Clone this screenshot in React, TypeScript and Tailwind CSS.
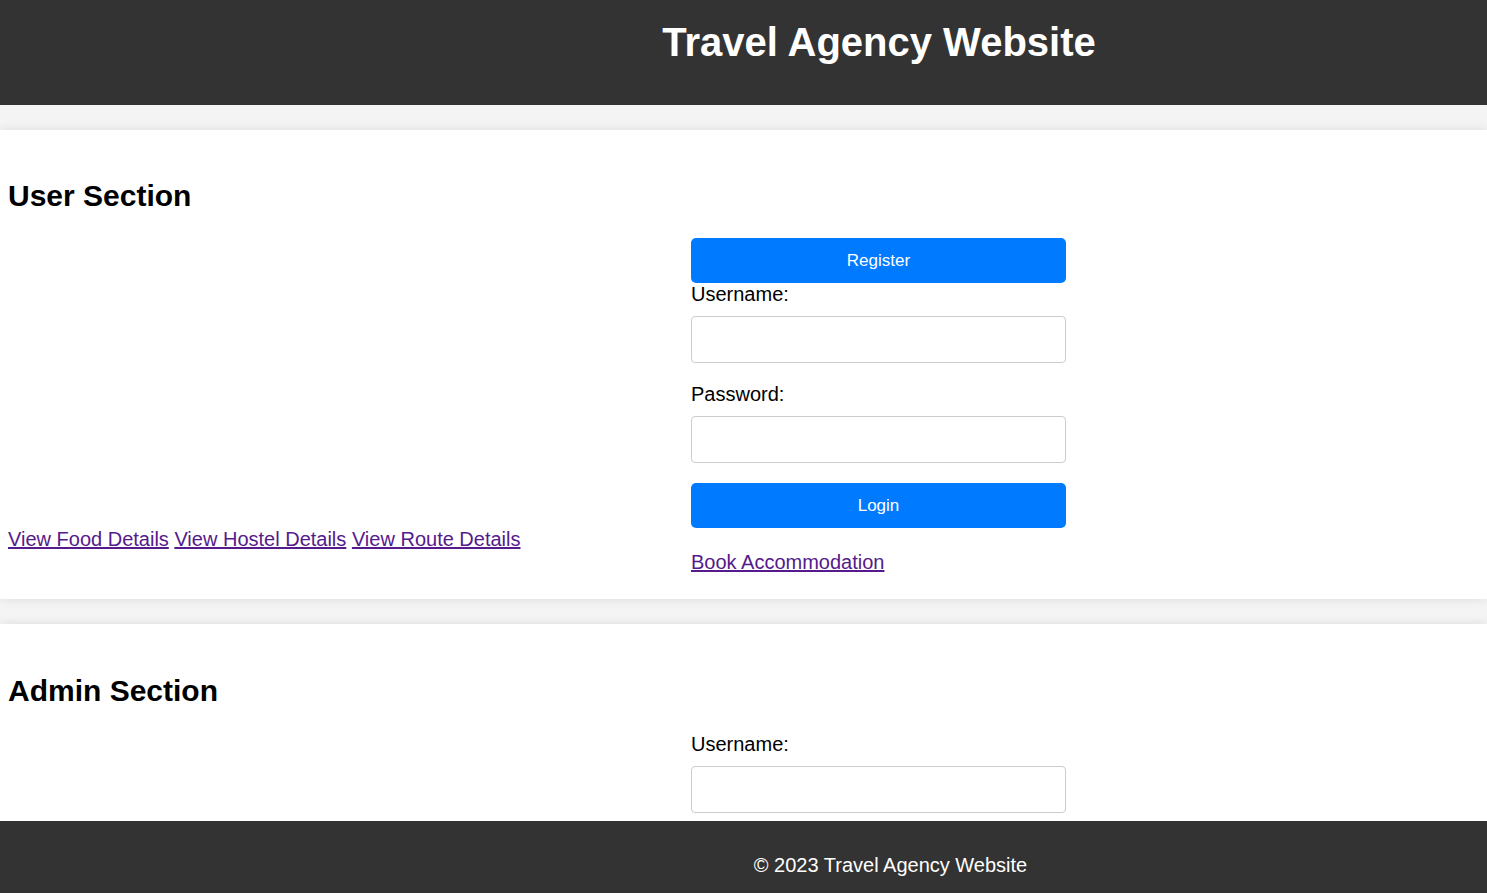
export default function App() {
  return (
    <div className="min-h-screen bg-[#f4f4f4] font-['Liberation_Sans',Arial,sans-serif] text-[20px] text-black">
      {/* Header */}
      <header className="h-[105px] bg-[#333333] pl-[271px] pt-[19px] text-center text-white">
        <h1 className="text-[40px] font-bold leading-[46px]">Travel Agency Website</h1>
      </header>

      <main className="flex flex-col gap-[25px] pt-[25px] pb-[80px]">
        {/* User Section */}
        <section className="bg-white px-2 pt-[49px] pb-[25px] shadow-[0_0_10px_rgba(0,0,0,0.1)]">
          <h2 className="text-[30px] font-bold leading-[34px]">User Section</h2>
          <div className="mt-[25px] flex items-end">
            <div className="w-[683px] shrink-0 pb-[23px] leading-[23px]">
              <a href="#" className="text-[#551a8b] underline">View Food Details</a>{" "}
              <a href="#" className="text-[#551a8b] underline">View Hostel Details</a>{" "}
              <a href="#" className="text-[#551a8b] underline">View Route Details</a>
            </div>
            <div className="w-[375px] shrink-0">
              <button className="block h-[45px] w-full rounded-[5px] bg-[#007bff] text-[17px] text-white">
                Register
              </button>
              <label className="block leading-[22px]">Username:</label>
              <input className="mt-[11px] block h-[47px] w-full rounded-[4px] border border-[#cccccc] px-[10px]" />
              <label className="mt-[20px] block leading-[22px]">Password:</label>
              <input type="password" className="mt-[11px] block h-[47px] w-full rounded-[4px] border border-[#cccccc] px-[10px]" />
              <button className="mt-[20px] block h-[45px] w-full rounded-[5px] bg-[#007bff] text-[17px] text-white">
                Login
              </button>
              <a href="#" className="mt-[23px] block w-fit leading-[23px] text-[#551a8b] underline">
                Book Accommodation
              </a>
            </div>
          </div>
        </section>

        {/* Admin Section */}
        <section className="bg-white px-2 pt-[50px] pb-[20px] shadow-[0_0_10px_rgba(0,0,0,0.1)]">
          <h2 className="text-[30px] font-bold leading-[34px]">Admin Section</h2>
          <div className="mt-[25px] flex items-end">
            <div className="w-[683px] shrink-0" />
            <div className="w-[375px] shrink-0">
              <label className="block leading-[22px]">Username:</label>
              <input className="mt-[11px] block h-[47px] w-full rounded-[4px] border border-[#cccccc] px-[10px]" />
            </div>
          </div>
        </section>
      </main>

      {/* Footer */}
      <footer className="fixed inset-x-0 bottom-0 h-[72px] bg-[#333333] pl-[294px] pt-[33px] text-center leading-[23px] text-white">
        © 2023 Travel Agency Website
      </footer>
    </div>
  )
}
